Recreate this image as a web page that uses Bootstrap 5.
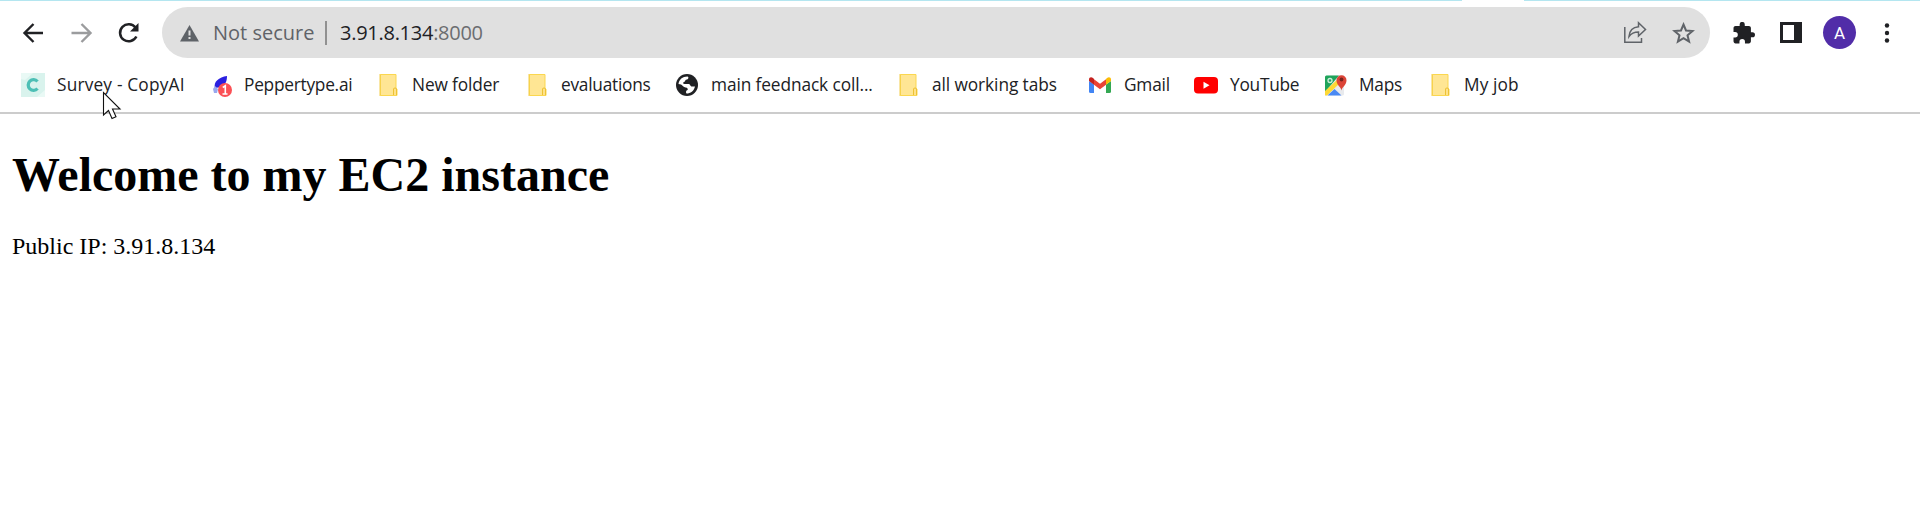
<!DOCTYPE html>
<html lang="en">
<head>
<meta charset="utf-8">
<meta name="viewport" content="width=device-width, initial-scale=1">
<title>3.91.8.134:8000</title>
<link href="https://cdn.jsdelivr.net/npm/bootstrap@5.3.0/dist/css/bootstrap.min.css" rel="stylesheet">
<style>
  body { font-family: "Open Sans", "Noto Sans", sans-serif; color: #202124; overflow: hidden; }
  svg { display: block; flex: none; }
  .tab-edge { height: 1px; background: linear-gradient(90deg, #b4e6f0 1462px, #fff 1462px 1524px, #b4e6f0 1524px); }
  .toolbar { height: 63px; padding: 6px 24px 6px 22px; }
  .nav-icons { flex: none; width: 140px; gap: 24.5px; }
  .omnibox { flex: none; width: 1548px; height: 51px; background: #e0e0e0; padding: 0 15px 0 17px; font-size: 20px; }
  .omnibox span { line-height: 51px; white-space: nowrap; }
  .secure-label { width: 112px; margin-left: 13px; color: #5f6368; letter-spacing: 0; }
  .split { width: 2px; height: 24px; background: #919191; }
  .address { margin-left: 13px; letter-spacing: -.27px; }
  .address small { font-size: inherit; color: #6b6d70; }
  .actions { gap: 25px; }
  .tools { margin-left: 23px; }
  .panel-icon { margin-left: 25px; }
  .avatar-disc { width: 33px; height: 33px; margin: 0 23px 0 21px; background: #512da8; font: 17px Roboto, sans-serif; line-height: 34px; }
  .bookmarks { height: 50px; padding: 0 0 8px 21px; border-bottom: 2px solid #ccc; font-size: 17.3px; }
  .bm { flex: none; height: 42px; white-space: nowrap; }
  .bm svg { width: 24px; height: 24px; margin-right: 12px; }
  .bm-survey { width: 187px; letter-spacing: .18px; }
  .bm-pepper { width: 168px; letter-spacing: -.25px; }
  .bm-new { width: 149px; letter-spacing: -.12px; }
  .bm-eval { width: 150px; letter-spacing: -.25px; }
  .bm-main { width: 221px; letter-spacing: -.1px; }
  .bm-all { width: 192px; letter-spacing: -.08px; }
  .bm-gmail { width: 106px; letter-spacing: -.2px; }
  .bm-yt { width: 129px; letter-spacing: -.25px; }
  .bm-maps { width: 105px; letter-spacing: -.2px; }
  .bm-job { letter-spacing: .1px; }
  .pointer { left: 102px; top: 91px; }
  .page { padding: 33px 12px; font-family: "Liberation Serif", serif; color: #000; }
  .page h1 { font-size: 48px; font-weight: 700; line-height: 55px; margin: 0 0 31px; }
  .page p { font-size: 24px; line-height: 27px; margin: 0; }
</style>
</head>
<body class="bg-white position-relative">
<svg width="0" height="0" class="position-absolute" aria-hidden="true">
  <symbol id="folder" viewBox="0 0 24 24">
    <path d="M4.500 1.500h15.500v14.500h1v6.500H4.500z" fill="#ffe694" stroke="#fbd74f"/>
    <path d="M4 1v22" stroke="#f3cd4a" stroke-width="1"/>
    <path d="M17.500 22v-6q0-1 1.500-1t1.500 1v6" fill="#ffe28a" stroke="#edc235"/>
  </symbol>
</svg>

<div class="tab-edge"></div>
<header class="toolbar d-flex align-items-center">
  <div class="nav-icons d-flex align-items-center">
    <svg width="23" height="22" viewBox="0 0 23 22" fill="none" stroke="#202124" stroke-width="2.400"><path d="M21 11H3M11.500 2L2.500 11l9 9"/></svg>
    <svg width="23" height="22" viewBox="0 0 23 22" fill="none" stroke="#9b9c9e" stroke-width="2.400"><path d="M1.500 11H20M11.500 2l9 9-9 9"/></svg>
    <svg width="23" height="22" viewBox="0 0 23 22"><path d="M18.500 5.500A8.600 8.600 0 1 0 19.400 14.500" fill="none" stroke="#202124" stroke-width="2.500"/><path d="M21.500 1v8.500H13z" fill="#202124"/></svg>
  </div>
  <div class="omnibox rounded-pill d-flex align-items-center">
    <svg width="21" height="18" viewBox="0 0 21 18"><path d="M10.500 1L20 17.500H1z" fill="#5f6368"/><path d="M9.500 6.500h2v5h-2zM9.500 13h2v2h-2z" fill="#e0e0e0"/></svg>
    <span class="secure-label">Not secure</span>
    <i class="split"></i>
    <span class="address">3.91.8.134<small>:8000</small></span>
    <div class="actions d-flex align-items-center ms-auto">
      <svg width="24" height="23" viewBox="0 0 24 23" fill="none" stroke="#5f6368" stroke-width="1.500"><path d="M1.800 6v15.200H18.500V17"/><path d="M6 15.500C6.500 9.500 10 6.300 15.500 5.800V1.800L22.500 8.500l-7 6.500v-4C11 11 8.500 12 6 15.500z"/></svg>
      <svg width="23" height="22" viewBox="0 0 23 22" fill="none" stroke="#5f6368" stroke-width="2"><path d="M11.500 2.500l2.500 6 6.500.5-5 4.300 1.600 6.400-5.600-3.500-5.600 3.500 1.600-6.400-5-4.300 6.500-.5z"/></svg>
    </div>
  </div>
  <div class="tools d-flex align-items-center">
    <svg width="22" height="22" viewBox="1.500 1.200 21.500 21.300"><path fill="#202124" d="M20.500 11H19V7c0-1.100-.9-2-2-2h-4V3.500a2.500 2.500 0 0 0-5 0V5H4c-1.100 0-2 .9-2 2v3.800h1.500a2.700 2.700 0 0 1 0 5.400H2V20c0 1.100.9 2 2 2h3.800v-1.500a2.700 2.700 0 0 1 5.400 0V22H17c1.100 0 2-.9 2-2v-4h1.500a2.500 2.500 0 0 0 0-5z"/></svg>
    <svg class="panel-icon" width="22" height="21" viewBox="0 0 22 21"><path d="M0 0h22v21H0z" fill="#202124"/><path d="M3 3h11v15H3z" fill="#fff"/></svg>
    <div class="avatar-disc rounded-circle text-white text-center">A</div>
    <svg width="16" height="22" viewBox="0 0 16 22" fill="#202124"><circle cx="8" cy="3.500" r="2.200"/><circle cx="8" cy="11" r="2.200"/><circle cx="8" cy="18.500" r="2.200"/></svg>
  </div>
</header>

<nav class="bookmarks d-flex">
  <div class="bm bm-survey d-flex align-items-center">
    <svg viewBox="0 0 24 24"><path d="M0 0h24v24H0z" fill="#d9f3ed"/><path d="M0 0h12L4 7 0 6zM16 24l8-7v7z" fill="#e9f9f5"/><path d="M16.500 8.500A5.300 5.300 0 1 0 16.500 15.500" fill="none" stroke="#4dbfb5" stroke-width="3.300"/></svg>Survey - CopyAI</div>
  <div class="bm bm-pepper d-flex align-items-center">
    <svg viewBox="0 0 24 24"><path d="M7 15C5 9 11 4 19 3c0 4-1 8-5 11z" fill="#2a1fe0"/><path d="M5 16l2-3 3 3-1 4H6z" fill="#9aa8ee"/><circle cx="17" cy="17" r="7" fill="#fb5055"/><path d="M14.800 14.500l2.500-1.800v8.500M14.500 21h5" fill="none" stroke="#fff" stroke-width="1.600"/></svg>Peppertype.ai</div>
  <div class="bm bm-new d-flex align-items-center"><svg><use href="#folder"/></svg>New folder</div>
  <div class="bm bm-eval d-flex align-items-center"><svg><use href="#folder"/></svg>evaluations</div>
  <div class="bm bm-main d-flex align-items-center">
    <svg viewBox="0 0 24 24"><circle cx="12" cy="12" r="11" fill="#202124"/><path d="M3.500 11C4 6.500 7.500 3.500 12.500 3.500c1.500.5 1 2.500-.5 3-2 0-1.500 2-3 2.500-1.500.5-1 2 .5 2h4c2 0 1.500 2.500 3.500 2.500h3C19 18 15.500 20.500 11.500 20.500c-1-1-.5-3 1-3.500 1-1-.5-2.500-2-2.500-2 0-3-2.500-4.500-3z" fill="#fff"/></svg>main feednack coll...</div>
  <div class="bm bm-all d-flex align-items-center"><svg><use href="#folder"/></svg>all working tabs</div>
  <div class="bm bm-gmail d-flex align-items-center">
    <svg viewBox="0 0 24 24"><path d="M1 8l5 3.500V20H2.500Q1 20 1 18.500z" fill="#4285f4"/><path d="M18 11.500L23 8v10.500q0 1.500-1.500 1.500H18z" fill="#34a853"/><path d="M6 6.200l6 4.500 6-4.500v5.500l-6 4.500-6-4.500z" fill="#ea4335"/><path d="M1 8V6.200C1 4 3.500 3.500 5 5l1 1v5.700z" fill="#c5221f"/><path d="M23 8V6.200C23 4 20.500 3.500 19 5l-1 1v5.700z" fill="#fbbc04"/></svg>Gmail</div>
  <div class="bm bm-yt d-flex align-items-center">
    <svg viewBox="0 0 24 24"><rect y="4" width="24" height="16.500" rx="4" fill="#f00"/><path d="M9.500 8.700v7l6-3.500z" fill="#fff"/></svg>YouTube</div>
  <div class="bm bm-maps d-flex align-items-center">
    <svg viewBox="0 0 24 24"><rect x="2" y="2.500" width="19" height="20" rx="1.500" fill="#e8eaed"/><path d="M2 4q0-1.500 1.500-1.500H16L2 19z" fill="#1fa45b"/><path d="M2 18L15 6l2 4L4 22.500H2z" fill="#fdd835"/><path d="M4.500 22.500l7-6.500 7 6.500z" fill="#4a89f3"/><circle cx="7" cy="7.500" r="2" fill="none" stroke="#cdeedb" stroke-width="1.300"/><path d="M18.500 17.500c-.5-4-5-5-5-10.300a5 5 0 0 1 10 0c0 5.300-4.500 6.300-5 10.300z" fill="#dc4437"/><circle cx="18.500" cy="6.500" r="1.900" fill="#7b231e"/></svg>Maps</div>
  <div class="bm bm-job d-flex align-items-center"><svg><use href="#folder"/></svg>My job</div>
</nav>

<main class="page">
  <h1>Welcome to my EC2 instance</h1>
  <p>Public IP: 3.91.8.134</p>
</main>

<svg class="pointer position-absolute" width="20" height="29" viewBox="0 0 20 29"><path d="M1.500 1.500v22.500l5-4.500 3.500 8 4-1.800-3.500-7.700h7.500z" fill="#fff" stroke="#111" stroke-width="1.100"/></svg>
<script src="https://cdn.jsdelivr.net/npm/bootstrap@5.3.0/dist/js/bootstrap.bundle.min.js"></script>
</body>
</html>
